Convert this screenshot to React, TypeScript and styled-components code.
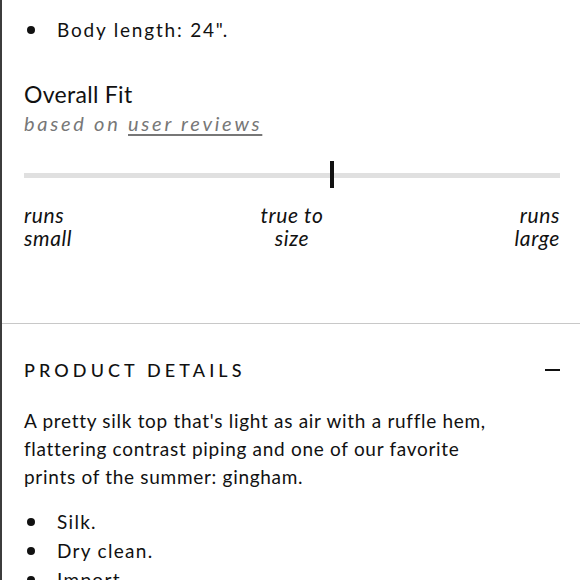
import React from "react";
import styled, { createGlobalStyle } from "styled-components";

const GlobalStyle = createGlobalStyle`
    html, body {
        margin: 0;
        padding: 0;
        background: #fff;
    }
    body {
        font-family: "Lato", "Open Sans", sans-serif;
        color: #111;
    }
`;

const Page = styled.div`
    width: 580px;
    height: 580px;
    overflow: hidden;
    box-sizing: border-box;
    border-left: 2px solid #3c3c3c;
`;

const Section = styled.div`
    padding: 0 20px 0 22px;
`;

const BulletList = styled.ul<{ $top?: number }>`
    list-style: none;
    margin: 0;
    padding: ${(p) => p.$top || 0}px 0 0;
`;

const Bullet = styled.li<{ $spacing?: number }>`
    display: flex;
    align-items: center;
    font-size: 19px;
    letter-spacing: ${(p) => p.$spacing ?? 1.3}px;
    height: 29px;

    &::before {
        content: "";
        width: 8px;
        height: 8px;
        border-radius: 50%;
        background: #111;
        margin-left: 3px;
        margin-right: 22px;
    }
`;

const FitBlock = styled.div`
    padding-top: 35px;
    padding-bottom: 74px;
`;

const FitTitle = styled.div`
    font-size: 23px;
    letter-spacing: 0.3px;
    line-height: 30px;
`;

const FitSub = styled.div`
    font-size: 20px;
    font-style: italic;
    color: #777;
    letter-spacing: 2.75px;
    line-height: 28px;

    a {
        color: #777;
        text-decoration: underline;
        text-underline-offset: 3px;
    }
`;

const Scale = styled.div`
    position: relative;
    margin-top: 24px;
    height: 28px;
    display: flex;
    align-items: center;
`;

const Track = styled.div`
    width: 100%;
    height: 5px;
    background: #e0e0e0;
`;

const Marker = styled.div`
    position: absolute;
    top: 0;
    width: 4px;
    height: 27px;
    background: #111;
    transform: translateX(-50%);
`;

const Labels = styled.div`
    display: grid;
    grid-template-columns: 1fr 1fr 1fr;
    margin-top: 14px;
    font-size: 21px;
    font-style: italic;
    letter-spacing: 0.6px;
    line-height: 23px;
`;

const Label = styled.div<{ $align: "left" | "center" | "right" }>`
    text-align: ${(p) => p.$align};
`;

const Divider = styled.hr`
    border: none;
    border-top: 1px solid #c8c8c8;
    margin: 0;
`;

const DetailsHead = styled.div`
    display: flex;
    align-items: center;
    justify-content: space-between;
    padding-top: 35px;
    height: 22px;
`;

const DetailsTitle = styled.div`
    font-size: 18px;
    letter-spacing: 4.1px;
    font-weight: 500;
`;

const Minus = styled.div`
    width: 15px;
    height: 2px;
    background: #111;
`;

const Paragraph = styled.p`
    max-width: 480px;
    margin: 26px 0 16px;
    font-size: 19px;
    line-height: 28px;
    letter-spacing: 0.7px;
`;

const App = () => {
    const fit = 57.5;

    return (
        <Page>
            <GlobalStyle />
            <Section>
                <BulletList $top={15}>
                    <Bullet $spacing={1.8}>Body length: 24".</Bullet>
                </BulletList>
                <FitBlock>
                    <FitTitle>Overall Fit</FitTitle>
                    <FitSub>
                        based on <a>user reviews</a>
                    </FitSub>
                    <Scale>
                        <Track />
                        <Marker style={{ left: `${fit}%` }} />
                    </Scale>
                    <Labels>
                        <Label $align="left">runs<br />small</Label>
                        <Label $align="center">true to<br />size</Label>
                        <Label $align="right">runs<br />large</Label>
                    </Labels>
                </FitBlock>
            </Section>
            <Divider />
            <Section>
                <DetailsHead>
                    <DetailsTitle>PRODUCT DETAILS</DetailsTitle>
                    <Minus />
                </DetailsHead>
                <Paragraph>
                    A pretty silk top that's light as air with a ruffle hem,
                    flattering contrast piping and one of our favorite prints of the summer: gingham.
                </Paragraph>
                <BulletList>
                    <Bullet>Silk.</Bullet>
                    <Bullet>Dry clean.</Bullet>
                    <Bullet>Import.</Bullet>
                </BulletList>
            </Section>
        </Page>
    );
};

export default App;
